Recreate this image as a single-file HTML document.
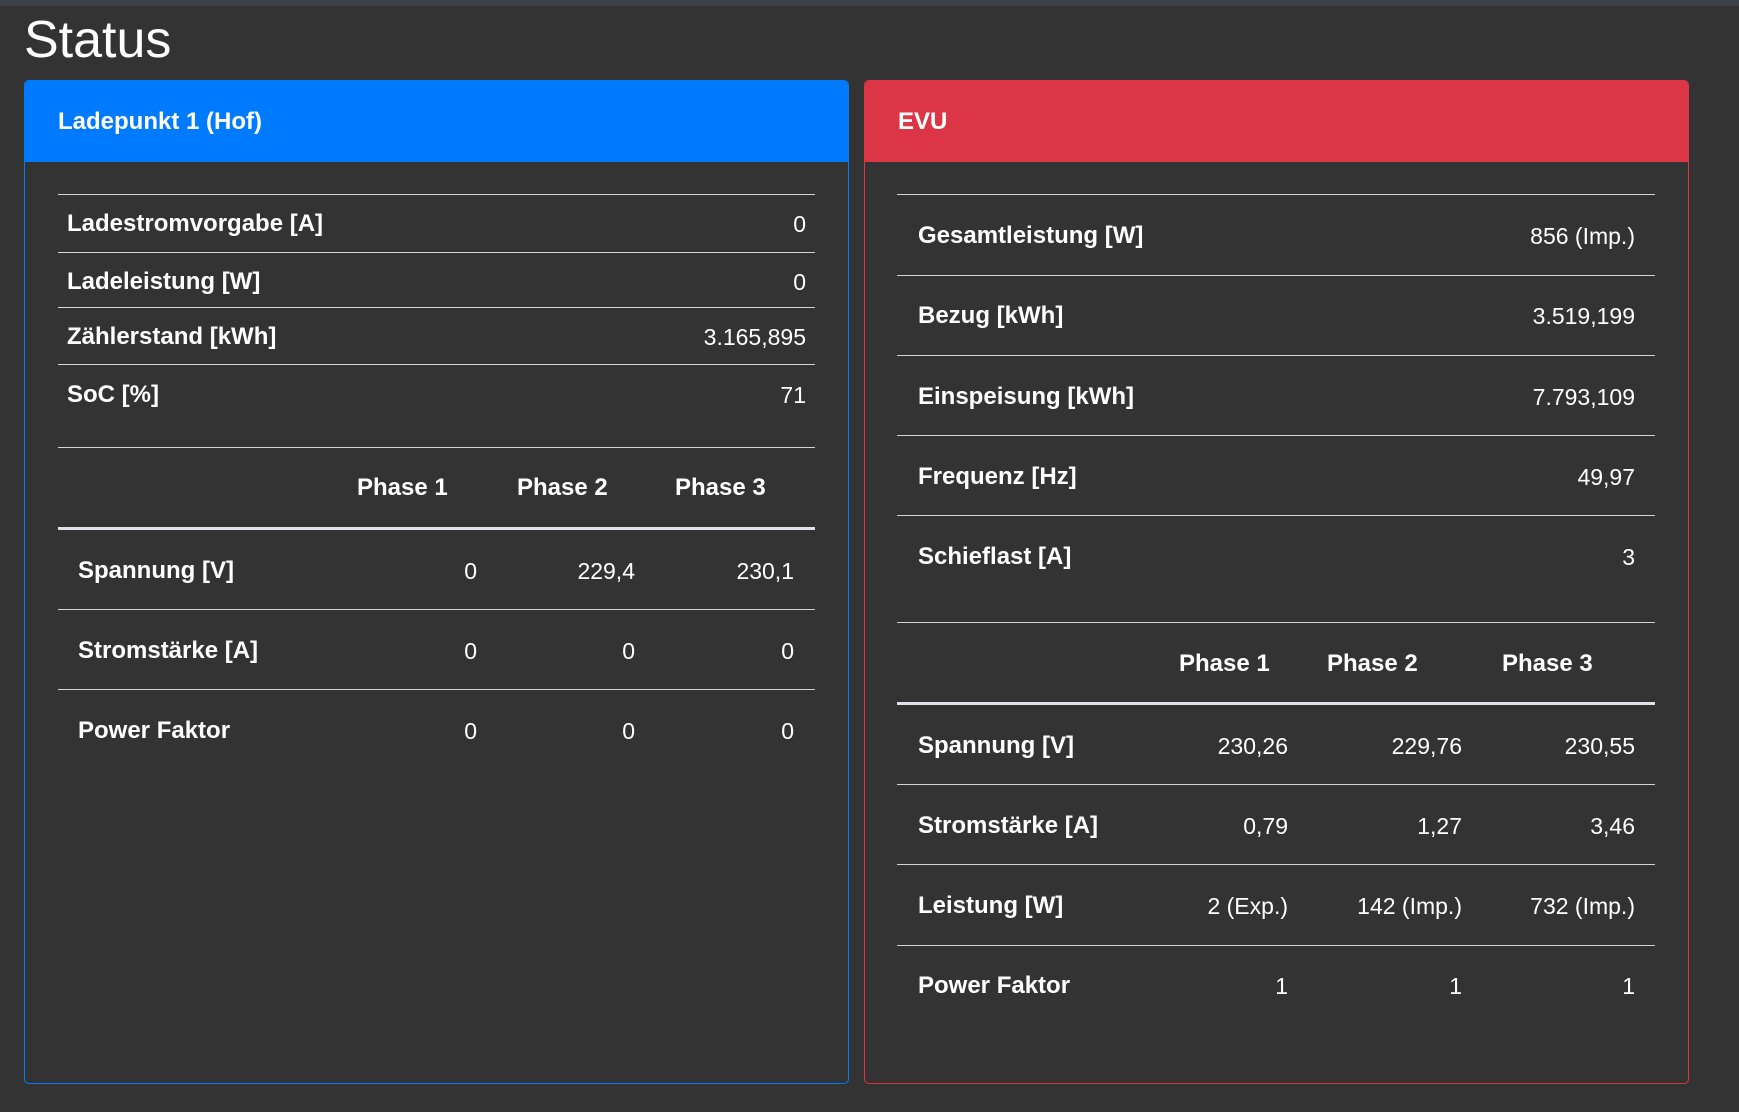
<!DOCTYPE html>
<html><head><meta charset="utf-8"><style>
body{margin:0;width:1739px;height:1112px;background:#333333;position:relative;overflow:hidden;font-family:"Liberation Sans",sans-serif;color:#fff}
.top{position:absolute;left:0;top:0;width:1739px;height:6px;background:#3b3f46}
h1{position:absolute;left:24px;top:8px;margin:0;font-size:52px;font-weight:normal;line-height:64px}
.card{position:absolute;top:80px;height:1004px;border-radius:5px;box-sizing:border-box}
.hd{position:absolute;left:0;top:0;right:0;height:81px;border-radius:4px 4px 0 0}
.ht{position:absolute;font-weight:bold;font-size:24px;line-height:30px;top:107px}
.ln{position:absolute;height:1px;background:#d4d4d4}
.tk{position:absolute;height:3px;background:#dee2e6}
.t{position:absolute;font-size:23px;line-height:30px;white-space:nowrap}
.b{font-weight:bold;font-size:24px}
</style></head><body>
<div class="top"></div>
<h1>Status</h1>

<div class="card" style="left:24px;width:825px;border:1px solid #007bff"><div class="hd" style="background:#007bff"></div></div>
<div class="card" style="left:864px;width:825px;border:1px solid #dc3545"><div class="hd" style="background:#dc3545"></div></div>
<div class="ht" style="left:58px">Ladepunkt 1 (Hof)</div>
<div class="ht" style="left:898px">EVU</div>

<div class="ln" style="left:58px;width:757px;top:194px"></div>
<div class="ln" style="left:58px;width:757px;top:252px"></div>
<div class="ln" style="left:58px;width:757px;top:307px"></div>
<div class="ln" style="left:58px;width:757px;top:364px"></div>
<div class="ln" style="left:58px;width:757px;top:447px"></div>
<div class="t b" style="left:67px;top:209px">Ladestromvorgabe [A]</div><div class="t" style="right:933px;top:209px">0</div>
<div class="t b" style="left:67px;top:267px">Ladeleistung [W]</div><div class="t" style="right:933px;top:267px">0</div>
<div class="t b" style="left:67px;top:322px">Zählerstand [kWh]</div><div class="t" style="right:933px;top:322px">3.165,895</div>
<div class="t b" style="left:67px;top:380px">SoC [%]</div><div class="t" style="right:933px;top:380px">71</div>

<div class="t b" style="left:357px;top:473px">Phase 1</div>
<div class="t b" style="left:517px;top:473px">Phase 2</div>
<div class="t b" style="left:675px;top:473px">Phase 3</div>
<div class="tk" style="left:58px;width:757px;top:527px"></div>
<div class="ln" style="left:58px;width:757px;top:609px"></div>
<div class="ln" style="left:58px;width:757px;top:689px"></div>
<div class="t b" style="left:78px;top:556px">Spannung [V]</div><div class="t" style="right:1262px;top:556px">0</div><div class="t" style="right:1104px;top:556px">229,4</div><div class="t" style="right:945px;top:556px">230,1</div>
<div class="t b" style="left:78px;top:636px">Stromstärke [A]</div><div class="t" style="right:1262px;top:636px">0</div><div class="t" style="right:1104px;top:636px">0</div><div class="t" style="right:945px;top:636px">0</div>
<div class="t b" style="left:78px;top:716px">Power Faktor</div><div class="t" style="right:1262px;top:716px">0</div><div class="t" style="right:1104px;top:716px">0</div><div class="t" style="right:945px;top:716px">0</div>

<div class="ln" style="left:897px;width:758px;top:194px"></div>
<div class="ln" style="left:897px;width:758px;top:275px"></div>
<div class="ln" style="left:897px;width:758px;top:355px"></div>
<div class="ln" style="left:897px;width:758px;top:435px"></div>
<div class="ln" style="left:897px;width:758px;top:515px"></div>
<div class="ln" style="left:897px;width:758px;top:622px"></div>
<div class="t b" style="left:918px;top:221px">Gesamtleistung [W]</div><div class="t" style="right:104px;top:221px">856 (Imp.)</div>
<div class="t b" style="left:918px;top:301px">Bezug [kWh]</div><div class="t" style="right:104px;top:301px">3.519,199</div>
<div class="t b" style="left:918px;top:382px">Einspeisung [kWh]</div><div class="t" style="right:104px;top:382px">7.793,109</div>
<div class="t b" style="left:918px;top:462px">Frequenz [Hz]</div><div class="t" style="right:104px;top:462px">49,97</div>
<div class="t b" style="left:918px;top:542px">Schieflast [A]</div><div class="t" style="right:104px;top:542px">3</div>

<div class="t b" style="left:1179px;top:649px">Phase 1</div>
<div class="t b" style="left:1327px;top:649px">Phase 2</div>
<div class="t b" style="left:1502px;top:649px">Phase 3</div>
<div class="tk" style="left:897px;width:758px;top:702px"></div>
<div class="ln" style="left:897px;width:758px;top:784px"></div>
<div class="ln" style="left:897px;width:758px;top:864px"></div>
<div class="ln" style="left:897px;width:758px;top:945px"></div>
<div class="t b" style="left:918px;top:731px">Spannung [V]</div><div class="t" style="right:451px;top:731px">230,26</div><div class="t" style="right:277px;top:731px">229,76</div><div class="t" style="right:104px;top:731px">230,55</div>
<div class="t b" style="left:918px;top:811px">Stromstärke [A]</div><div class="t" style="right:451px;top:811px">0,79</div><div class="t" style="right:277px;top:811px">1,27</div><div class="t" style="right:104px;top:811px">3,46</div>
<div class="t b" style="left:918px;top:891px">Leistung [W]</div><div class="t" style="right:451px;top:891px">2 (Exp.)</div><div class="t" style="right:277px;top:891px">142 (Imp.)</div><div class="t" style="right:104px;top:891px">732 (Imp.)</div>
<div class="t b" style="left:918px;top:971px">Power Faktor</div><div class="t" style="right:451px;top:971px">1</div><div class="t" style="right:277px;top:971px">1</div><div class="t" style="right:104px;top:971px">1</div>
</body></html>
